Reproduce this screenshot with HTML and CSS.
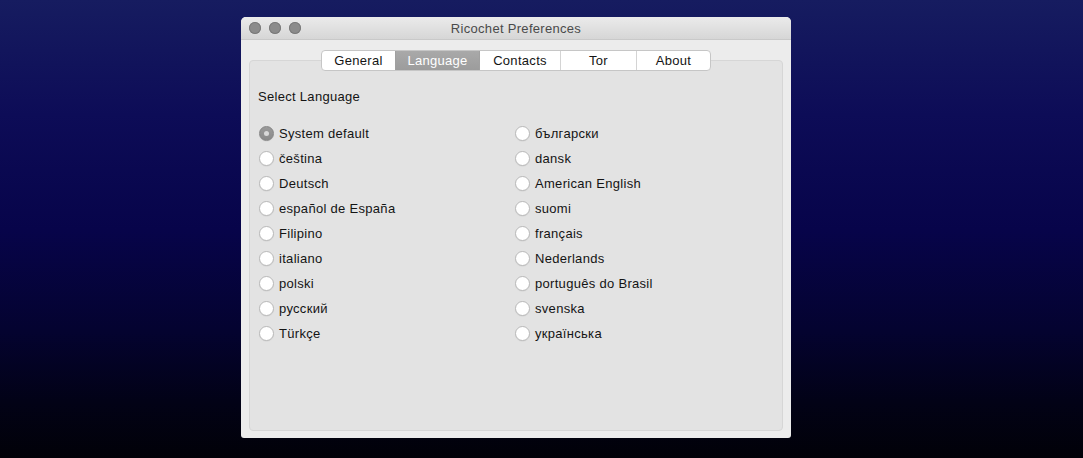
FILE: index.html
```html
<!DOCTYPE html>
<html>
<head>
<meta charset="utf-8">
<link rel="stylesheet" href="styles.css">
</head>
<body>
<div class="window">
  <div class="titlebar">
    <div class="lights">
      <span class="light"></span><span class="light"></span><span class="light"></span>
    </div>
    <div class="title">Ricochet Preferences</div>
    <div class="spacer"></div>
  </div>
  <div class="content">
    <div class="tabs">
      <div class="tab t-general">General</div>
      <div class="tab t-language active">Language</div>
      <div class="tab t-contacts">Contacts</div>
      <div class="tab t-tor">Tor</div>
      <div class="tab t-about">About</div>
    </div>
    <div class="panel">
      <div class="heading">Select Language</div>
      <div class="grid">
        <div class="opt"><span class="radio checked"></span>System default</div>
        <div class="opt"><span class="radio"></span>български</div>
        <div class="opt"><span class="radio"></span>čeština</div>
        <div class="opt"><span class="radio"></span>dansk</div>
        <div class="opt"><span class="radio"></span>Deutsch</div>
        <div class="opt"><span class="radio"></span>American English</div>
        <div class="opt"><span class="radio"></span>español de España</div>
        <div class="opt"><span class="radio"></span>suomi</div>
        <div class="opt"><span class="radio"></span>Filipino</div>
        <div class="opt"><span class="radio"></span>français</div>
        <div class="opt"><span class="radio"></span>italiano</div>
        <div class="opt"><span class="radio"></span>Nederlands</div>
        <div class="opt"><span class="radio"></span>polski</div>
        <div class="opt"><span class="radio"></span>português do Brasil</div>
        <div class="opt"><span class="radio"></span>русский</div>
        <div class="opt"><span class="radio"></span>svenska</div>
        <div class="opt"><span class="radio"></span>Türkçe</div>
        <div class="opt"><span class="radio"></span>українська</div>
      </div>
    </div>
  </div>
</div>
</body>
</html>
```
FILE: styles.css
```css
html, body {
  margin: 0;
  padding: 0;
  height: 100%;
}
body {
  background: linear-gradient(to bottom, #161c60 0%, #0d0c57 25%, #07044a 50%, #040330 72%, #020216 88%, #010108 100%);
  font-family: "Liberation Sans", Arial, sans-serif;
  font-size: 13px;
  letter-spacing: 0.3px;
  color: #141414;
  overflow: hidden;
}
.window {
  width: 550px;
  height: 421px;
  margin: 17px 0 0 241px;
  background: #ececec;
  border-radius: 5px 5px 3px 3px;
  overflow: hidden;
  display: flex;
  flex-direction: column;
}
.titlebar {
  height: 22px;
  flex: none;
  display: grid;
  grid-template-columns: 64px 1fr 64px;
  align-items: center;
  background: linear-gradient(to bottom, #ebebeb, #d6d6d6);
  border-bottom: 1px solid #c9c9c9;
}
.lights {
  display: flex;
  gap: 8px;
  padding-left: 8px;
}
.light {
  width: 12px;
  height: 12px;
  border-radius: 50%;
  background: #8b8b8b;
  box-shadow: inset 0 0 0 1px #7a7a7a;
  box-sizing: border-box;
}
.title {
  text-align: center;
  color: #4a4a4a;
  font-size: 13px;
}
.content {
  flex: 1;
  display: flex;
  flex-direction: column;
  padding: 10px 8px 7px 8px;
}
.tabs {
  align-self: center;
  display: flex;
  height: 21px;
  margin-bottom: -11px;
  position: relative;
  z-index: 1;
  background: #fff;
  border: 1px solid #c6c6c6;
  border-radius: 4px;
  box-sizing: border-box;
  overflow: hidden;
}
.tab {
  display: flex;
  align-items: center;
  justify-content: center;
  color: #141414;
  border-left: 1px solid #d4d4d4;
  box-sizing: border-box;
}
.tab:first-child { border-left: none; }
.t-general { width: 73px; }
.t-language { width: 84px; }
.t-contacts { width: 81px; }
.t-tor { width: 76px; }
.t-about { width: 74px; }
.tab.active {
  background: linear-gradient(to bottom, #a9a9a9, #9c9c9c);
  color: #fff;
  border-left-color: #a0a0a0;
}
.tab.active + .tab { border-left-color: #a0a0a0; }
.panel {
  flex: 1;
  background: #e3e3e3;
  border: 1px solid #d6d6d6;
  border-radius: 4px;
  padding: 28px 8px 0 8px;
}
.heading {
  line-height: 16px;
  height: 16px;
  margin-bottom: 16px;
}
.grid {
  display: grid;
  grid-template-columns: 256px 256px;
  grid-auto-rows: 25px;
  margin-left: 1px;
}
.opt {
  display: flex;
  align-items: center;
  gap: 5px;
  white-space: nowrap;
}
.radio {
  width: 15px;
  height: 15px;
  border-radius: 50%;
  box-sizing: border-box;
  background: #fff;
  border: 1px solid #b9b9b9;
  box-shadow: 0 0.5px 1px rgba(0,0,0,0.08);
  flex: none;
  display: flex;
  align-items: center;
  justify-content: center;
}
.radio.checked {
  background: linear-gradient(to bottom, #9a9a9a, #8a8a8a);
  border-color: #858585;
}
.radio.checked::after {
  content: "";
  width: 5px;
  height: 5px;
  border-radius: 50%;
  background: #d9d9d9;
}
```
